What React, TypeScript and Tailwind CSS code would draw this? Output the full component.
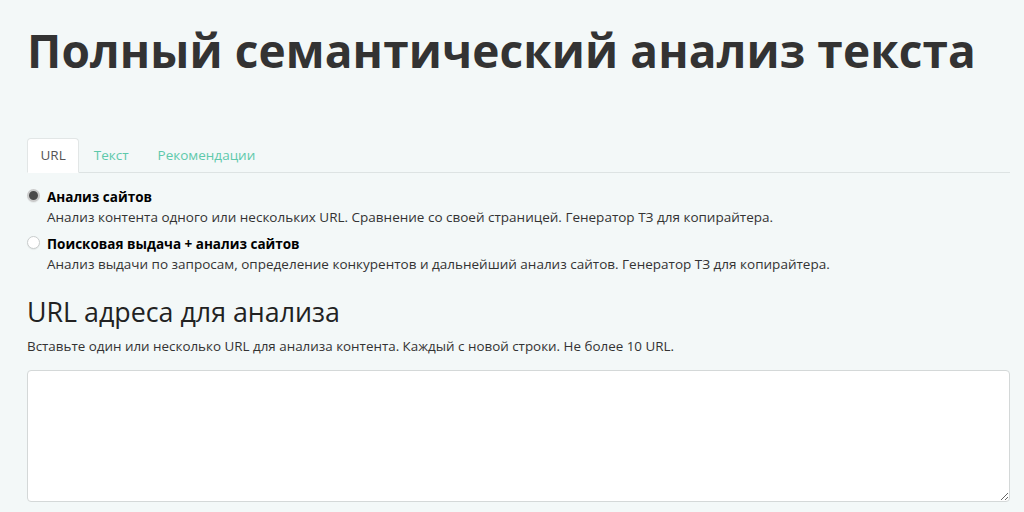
import React, { useState } from "react";

export default function App() {
  const [tab, setTab] = useState("url");
  const [mode, setMode] = useState("sites");
  const [urls, setUrls] = useState("");

  const tabs = [
    { id: "url", label: "URL" },
    { id: "text", label: "Текст" },
    { id: "recs", label: "Рекомендации" },
  ];

  // radio options
  const modes = [
    {
      id: "sites",
      title: "Анализ сайтов",
      desc: "Анализ контента одного или нескольких URL. Сравнение со своей страницей. Генератор ТЗ для копирайтера.",
    },
    {
      id: "serp",
      title: "Поисковая выдача + анализ сайтов",
      desc: "Анализ выдачи по запросам, определение конкурентов и дальнейший анализ сайтов. Генератор ТЗ для копирайтера.",
    },
  ];

  return (
    <div className="min-h-[512px] bg-[#f3f8f8] px-[27px] text-[#333] font-['Open_Sans',sans-serif]">
      <div className="w-[983px]">
        <h1 className="pt-[22px] text-[46px] font-bold leading-[56px] tracking-[0.1px] text-[#333]">
          Полный семантический анализ текста
        </h1>

        {/* tabs */}
        <div className="mt-[60px] flex border-b border-[#dde3e3]">
          {tabs.map((t) => (
            <button
              key={t.id}
              onClick={() => setTab(t.id)}
              className={
                tab === t.id
                  ? "-mb-px h-[35px] rounded-t border border-[#e2e6e6] border-b-white bg-white px-[12.5px] text-[13.5px] text-[#555]"
                  : "-mb-px h-[35px] border border-transparent px-[13.5px] text-[13.5px] text-[#5ec9ab]"
              }
            >
              {t.label}
            </button>
          ))}
        </div>

        {/* mode radios */}
        <div className="mt-[14px] flex flex-col gap-[6px]">
          {modes.map((m) => (
            <label key={m.id} className="flex cursor-pointer gap-[7px]">
              <input
                type="radio"
                name="mode"
                checked={mode === m.id}
                onChange={() => setMode(m.id)}
                className="m-0 mt-[2px] box-border h-[13px] min-h-[13px] w-[13px] min-w-[13px] shrink-0 appearance-none rounded-full border border-[#c9cdcd] bg-white shadow-[0_1px_1px_rgba(0,0,0,0.06)] checked:border-[2.5px] checked:border-[#cacaca] checked:bg-[#4a4a4a]"
              />
              <span className="flex flex-col">
                <span className="text-[13.5px] font-bold leading-[20px] text-black">{m.title}</span>
                <span className="text-[13.5px] leading-[21px] text-[#333]">{m.desc}</span>
              </span>
            </label>
          ))}
        </div>

        <h2 className="mt-[19px] text-[26.8px] leading-[36px] text-[#222]">URL адреса для анализа</h2>
        <p className="mt-[6px] text-[13.4px] leading-[20px] text-[#333]">
          Вставьте один или несколько URL для анализа контента. Каждый с новой строки. Не более 10 URL.
        </p>
        <textarea
          value={urls}
          onChange={(e) => setUrls(e.target.value)}
          className="mt-[14px] block h-[132px] w-full rounded border border-[#d4d8d8] bg-white px-3 py-2 text-[14px] outline-none"
        />
      </div>
    </div>
  );
}
